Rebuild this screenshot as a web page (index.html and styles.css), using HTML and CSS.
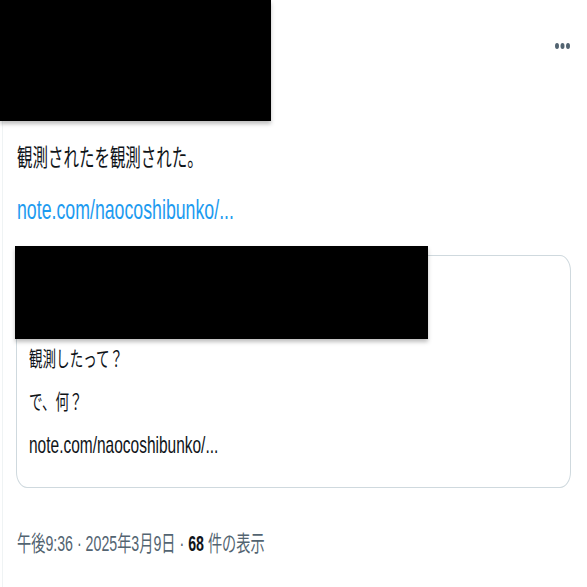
FILE: index.html
```html
<!DOCTYPE html>
<html lang="ja">
<head>
  <meta charset="UTF-8" />
  <title>ポスト</title>
  <link rel="stylesheet" href="styles.css">
</head>
<body>

<div class="page">
  <article class="tweet">
    <header class="tweet-head">
      <div class="redacted author"></div>
      <button class="more" title="もっと見る">
        <svg xmlns="http://www.w3.org/2000/svg" viewBox="0 0 15 6">
          <ellipse cx="2" cy="3" rx="2" ry="2.9"/>
          <ellipse cx="7.5" cy="3" rx="2" ry="2.9"/>
          <ellipse cx="13" cy="3" rx="2" ry="2.9"/>
        </svg>
      </button>
    </header>

    <p class="tweet-text">観測されたを観測された。</p>
    <a class="tweet-link" href="#">note.com/naocoshibunko/...</a>

    <div class="quote">
      <div class="redacted quote-author"></div>
      <p class="quote-text">観測したって？</p>
      <p class="quote-text">で、何？</p>
      <p class="quote-link">note.com/naocoshibunko/...</p>
    </div>

    <div class="meta">午後9:36 · 2025年3月9日 · <b>68</b> 件の表示</div>
  </article>
</div>

</body>
</html>
```

FILE: styles.css
```css
body {
  margin: 0;
  background-color: #fff;
  color: #0f1419;
  font-family: "Liberation Sans", "Noto Sans CJK JP", sans-serif;
}

.page {
  margin-left: 2px;
  border-left: 1px solid #eff3f4;
  min-height: 587px;
}

.tweet {
  padding-left: 14px;
}

/* the shot is squeezed sideways, so every line of text is narrowed */
.tweet-text,
.tweet-link,
.quote p,
.meta {
  display: block;
  transform: scaleX(0.645);
  transform-origin: left center;
  white-space: nowrap;
}

.tweet-head {
  display: flex;
  justify-content: space-between;
  align-items: flex-start;
  margin-left: -17px;
}

.redacted {
  background-color: #000;
  box-shadow: 0 3px 4px rgba(0, 0, 0, 0.25);
}

.author {
  width: 271px;
  height: 121px;
}

.more {
  background: none;
  border: none;
  padding: 0;
  margin: 43px 17px 0 0;
  cursor: pointer;
}

.more svg {
  display: block;
  width: 15px;
  height: 6px;
  fill: #536471;
}

.tweet-text {
  margin: 21px 0 0;
  font-size: 24px;
  line-height: 32px;
}

.tweet-link {
  margin-top: 20px;
  font-size: 27.5px;
  line-height: 32px;
  color: #1d9bf0;
  text-decoration: none;
}

.quote {
  position: relative;
  margin: 29px 16px 0 -1px;
  padding: 81px 0 21px 12px;
  border: 1px solid #cfd9de;
  border-radius: 11px / 16px;
}

.quote-author {
  position: absolute;
  top: -10px;
  left: -2px;
  width: 413px;
  height: 93px;
}

.quote p {
  margin: 0;
  line-height: 43px;
}

.quote-text {
  font-size: 21px;
}

.quote-link {
  font-size: 24px;
}

.meta {
  margin-top: 41px;
  font-size: 22px;
  line-height: 30px;
  color: #536471;
}

.meta b {
  color: #0f1419;
}
```
